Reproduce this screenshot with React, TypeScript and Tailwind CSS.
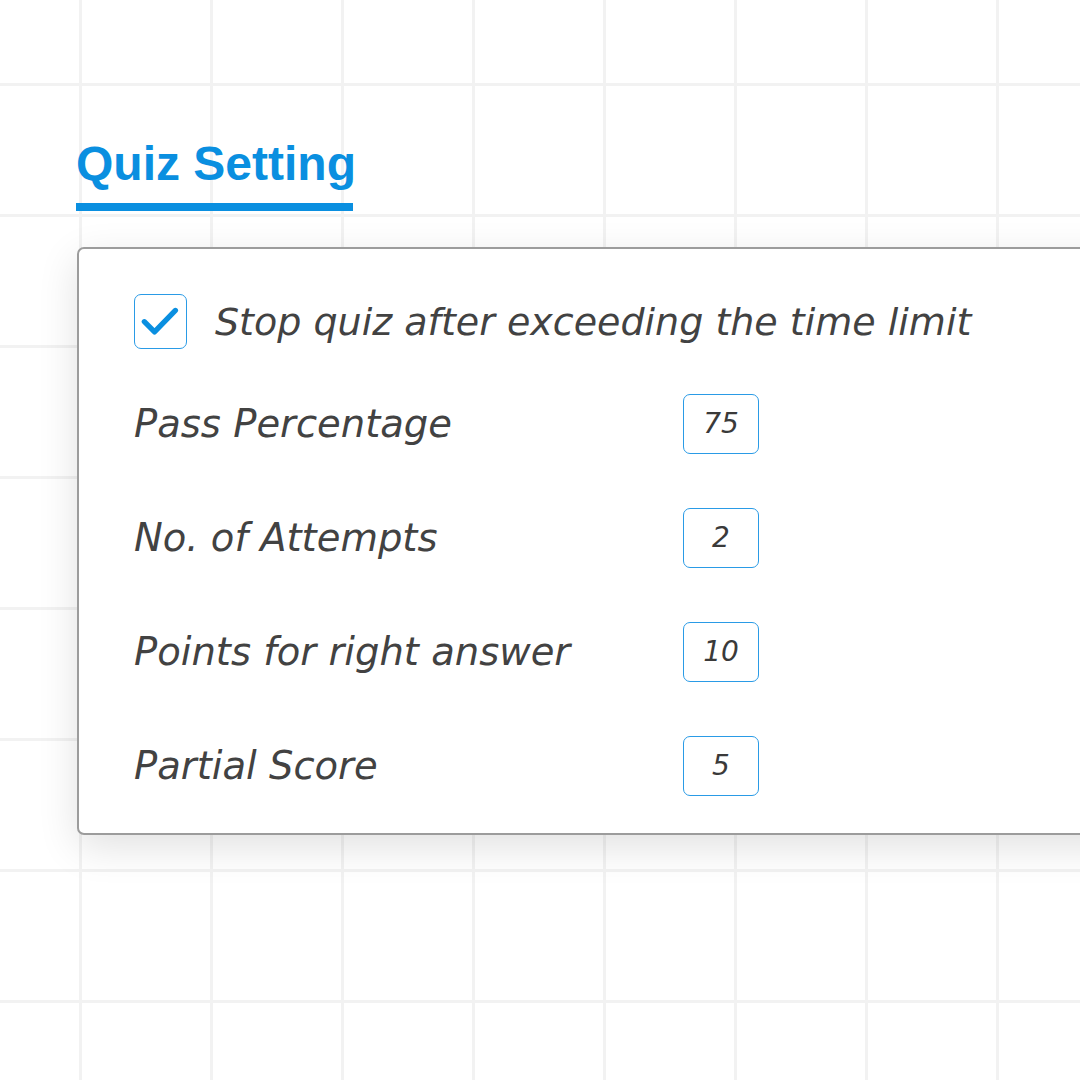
const rows = [
  { label: "Pass Percentage", value: "75" },
  { label: "No. of Attempts", value: "2" },
  { label: "Points for right answer", value: "10" },
  { label: "Partial Score", value: "5" },
];

function CheckBox() {
  return (
    <div className="flex h-[55px] w-[53px] shrink-0 items-center justify-center rounded-[7px] border border-[#2a9be6] bg-white">
      <svg viewBox="0 0 53 55" className="h-[55px] w-[53px]">
        <path d="M9.7 27.7 L20.3 38.3 L42 16" fill="none" stroke="#0a8fe0" strokeWidth="5.5" strokeLinecap="round" strokeLinejoin="round" />
      </svg>
    </div>
  );
}

export default function App() {
  return (
    <div className="relative h-[1080px] w-[1080px] overflow-hidden bg-white bg-[linear-gradient(to_right,#f2f2f2_3px,transparent_3px),linear-gradient(to_bottom,#f2f2f2_3px,transparent_3px)] [background-size:131px_131px] [background-position:79px_83px] font-['DejaVu_Sans',sans-serif]">
      <div className="pl-[76px] pt-[140px]">
        <h1 className="font-['Liberation_Sans',Arial,sans-serif] text-[48px] font-bold leading-none text-[#0a8fe0]">
          Quiz Setting
        </h1>
        <div className="mt-[15px] h-[8px] w-[277px] bg-[#0a8fe0]" />
      </div>

      <div className="ml-[77px] mt-[36px] w-[1100px] rounded-l-[7px] border-2 border-[#9c9c9c] bg-white pb-[37px] pl-[55px] pt-[45px] shadow-[0_12px_40px_rgba(0,0,0,0.12)]">
        <div className="flex items-center gap-[28px]">
          <CheckBox />
          <span className="text-[38px] italic font-light leading-none text-[#424242]">
            Stop quiz after exceeding the time limit
          </span>
        </div>

        <div className="mt-[45px] flex flex-col gap-[54px]">
          {rows.map((row) => (
            <div key={row.label} className="flex h-[60px] items-center">
              <span className="w-[549px] shrink-0 text-[38.5px] italic font-light leading-none text-[#424242]">
                {row.label}
              </span>
              <div className="flex h-[60px] w-[76px] items-center justify-center rounded-[7px] border border-[#2a9be6] text-[28px] italic font-light text-[#3a3a3a]">
                {row.value}
              </div>
            </div>
          ))}
        </div>
      </div>
    </div>
  );
}
